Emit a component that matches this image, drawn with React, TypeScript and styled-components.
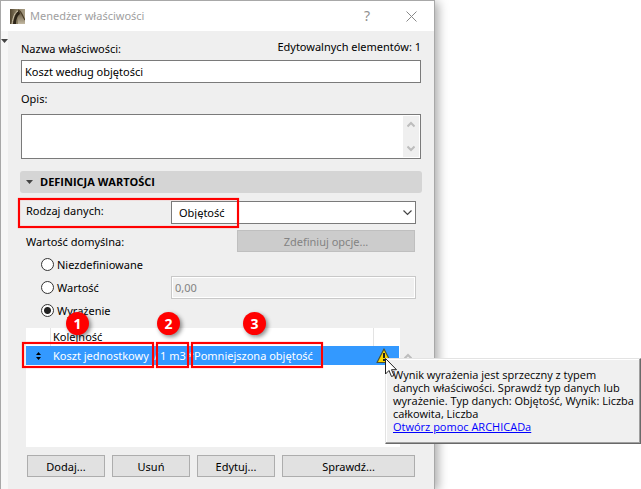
import React from "react";
import styled, { createGlobalStyle, css } from "styled-components";

const GlobalStyle = createGlobalStyle`
  *, *::before, *::after { box-sizing: border-box; }
  body {
    margin: 0;
    background: #fff;
    color: #000;
    font: 11px/13px "Noto Sans", "Open Sans", sans-serif;
  }
  button, input, select, textarea { font: inherit; color: inherit; margin: 0; }
`;

const Page = styled.div`
  min-height: 100vh;
  padding-right: 206px;
  display: flex;
  overflow: hidden;
`;

const Dialog = styled.main`
  flex: 1;
  min-width: 0;
  border: 1px solid #a8a8a8;
  border-bottom: 0;
  background: #efefef;
  box-shadow: 3px 2px 10px rgba(0, 0, 0, 0.35);
  display: flex;
  flex-direction: column;
`;

const TitleBar = styled.header`
  height: 30px;
  padding: 0 17px 0 9px;
  background: #fff;
  display: flex;
  align-items: center;
`;

const Title = styled.h1`
  margin: 0 auto 0 5px;
  font-size: 11px;
  font-weight: 400;
  line-height: 16px;
  color: #a0a0a0;
`;

const TitleButton = styled.button`
  width: 12px;
  height: 16px;
  margin-left: 32px;
  padding: 0;
  border: 0;
  background: none;
  color: #909090;
  font-size: 14px;
  line-height: 16px;
  display: grid;
  place-items: center;
`;

const Body = styled.div`
  flex: 1;
  display: flex;
`;

const Gutter = styled.div`
  width: 7px;
  background: #f7f7f7;
  padding-top: 8px;
`;

const Content = styled.div`
  flex: 1;
  min-width: 0;
  padding: 9px 12px 11px;
`;

const Field = styled.div`
  padding: 0 1px;
`;

const NameHeader = styled.div`
  display: flex;
  justify-content: space-between;
  height: 20px;
`;

const NameLabel = styled.label`
  padding-top: 2px;
`;

const TextInput = styled.input`
  display: block;
  width: 100%;
  height: 23px;
  padding: 0 3px;
  border: 1px solid #7a7a7a;
  background: #fff;

  &:disabled {
    border-color: #c8c8c8;
    background: #efefef;
    color: #828282;
    box-shadow: inset 0 0 0 1px #fff;
  }
`;

const DescriptionLabel = styled.label`
  display: block;
  padding: 9px 0;
`;

const TextFrame = styled.div`
  display: flex;
  height: 45px;
  padding: 1px;
  border: 1px solid #7a7a7a;
  background: #fff;
`;

const TextArea = styled.textarea`
  flex: 1;
  min-width: 0;
  padding: 3px;
  border: 0;
  resize: none;
  overflow: hidden;
  background: #fff;
`;

const ScrollTrack = styled.div`
  width: 16px;
  padding: 5px 4px;
  background: #efefef;
  display: flex;
  flex-direction: column;
  justify-content: space-between;
`;

const SectionHeader = styled.h2`
  height: 22px;
  margin: 12px 0 5px;
  padding: 0 6px;
  border-radius: 3px;
  background: #d5d5d5;
  font-family: "Open Sans", "Noto Sans", sans-serif;
  font-size: 11px;
  line-height: 16px;
  display: flex;
  align-items: center;
  gap: 7px;
`;

const Section = styled.section`
  padding: 0 6px;
`;

const frame = css`
  border: 2px solid #f00;
  box-shadow: inset 0 0 1px #f44, 0 0 1px #f66;
  pointer-events: none;
`;

const TypeRow = styled.div`
  position: relative;
  display: grid;
  grid-template-columns: 145px 1fr;
  padding: 3px 0;
`;

const TypeFrame = styled.div`
  ${frame}
  position: absolute;
  left: -8px;
  top: 0;
  width: 221px;
  height: 30px;
`;

const RowLabel = styled.label`
  padding-top: 3px;
`;

const SelectBox = styled.div`
  position: relative;
  svg { position: absolute; right: 4px; top: 8px; pointer-events: none; }
`;

const Select = styled.select`
  appearance: none;
  display: block;
  width: 100%;
  height: 23px;
  padding: 0 20px 0 7px;
  border: 1px solid #7a7a7a;
  border-radius: 0;
  background: #fff;
`;

const DefaultRow = styled.div`
  display: flex;
  justify-content: space-between;
  align-items: center;
  padding: 3px 1px 0 0;
`;

const Button = styled.button`
  min-width: 0;
  height: 22px;
  padding: 0;
  border: 1px solid #adadad;
  background: #e1e1e1;

  &:disabled {
    width: 178px;
    border-color: #bfbfbf;
    background: #ccc;
    color: #838383;
  }
`;

const Options = styled.fieldset`
  margin: 0 0 6px;
  padding: 1px 0 0 15px;
  border: 0;
  min-width: 0;
  display: grid;
  grid-template-columns: 130px 1fr;
  grid-auto-rows: 23px;
`;

const RadioLabel = styled.label`
  grid-column: 1;
  display: flex;
  align-items: center;
  gap: 3px;
`;

const Radio = styled.input`
  appearance: none;
  width: 13px;
  height: 13px;
  border: 1px solid #333;
  border-radius: 50%;
  background: #fff;
  &:checked { background: radial-gradient(circle, #222 3px, #fff 4px); }
`;

const ListArea = styled.div`
  position: relative;
  display: grid;
  grid-template-columns: 1fr 16px;
  height: 119px;
`;

const ListPane = styled.div`
  background: #fff;
`;

const ListScroll = styled.div`
  padding: 21px 0 0 4px;
`;

const Table = styled.table`
  width: 100%;
  padding-right: 1px;
  border-spacing: 0;
  table-layout: fixed;
`;

const HeadCell = styled.th<{ $width?: number }>`
  width: ${(p) => (p.$width ? `${p.$width}px` : "auto")};
  height: 18px;
  padding: 0 0 2px 2px;
  border-right: 1px solid #e3e3e3;
  font-weight: 400;
  text-align: left;
  &:last-child { border-right: 0; }
`;

const Cell = styled.td`
  height: 19px;
  padding: 0 0 0 2px;
  background: #3399ff;
  color: #fff;
  white-space: pre;
  &:first-child { padding-left: 10px; }
  svg { display: block; }
`;

const Formula = styled.span`
  display: flex;
`;

const Term = styled.span<{ $width: number }>`
  width: ${(p) => p.$width}px;
`;

const WarningAnchor = styled.div`
  position: relative;
`;

const Tooltip = styled.div`
  position: absolute;
  left: 9px;
  top: 10px;
  z-index: 3;
  width: 256px;
  padding: 9px 2px 10px 7px;
  border: 1px solid;
  border-color: #e3e3e3 #696969 #696969 #e3e3e3;
  box-shadow: inset -1px -1px #a0a0a0, inset 1px 1px #fff;
  background: #f0f0f0;
  color: #000;
  font-family: "Open Sans", "Noto Sans", sans-serif;
  white-space: normal;
  p { margin: 0; }
  a { color: #00f; }
`;

const Cursor = styled.svg`
  position: absolute;
  left: 9px;
  top: 10px;
  z-index: 4;
`;

const Mark = styled.div<{ $left: number; $width: number }>`
  ${frame}
  position: absolute;
  z-index: 1;
  left: ${(p) => p.$left}px;
  top: 14px;
  width: ${(p) => p.$width}px;
  height: 26px;
`;

const Badge = styled.span<{ $left: number }>`
  position: absolute;
  z-index: 2;
  left: ${(p) => p.$left}px;
  top: -16px;
  width: 23px;
  height: 23px;
  border-radius: 50%;
  background: #f00;
  color: #fff;
  box-shadow: 2px 2px 4px rgba(0, 0, 0, 0.45);
  font-size: 14px;
  font-weight: 700;
  line-height: 23px;
  text-align: center;
`;

const ButtonRow = styled.div`
  display: grid;
  grid-template-columns: 78fr 78fr 78fr 133fr;
  gap: 7px;
  padding: 8px 1px 0;
`;

const ScrollArrow = ({ down = false }: { down?: boolean }) => (
  <svg width="8" height="7" viewBox="0 0 8 7" aria-hidden="true">
    <path d={down ? "M0.5 1.5 4 5 7.500 1.5" : "M0.5 5.5 4 2 7.500 5.5"} fill="none" stroke="#bdbdbd" strokeWidth="2" />
  </svg>
);

const Logo = () => (
  <svg width="15" height="15" viewBox="0 0 15 15" aria-hidden="true">
    <defs>
      <linearGradient id="logoBack" x1="0" x2="1" y1="0" y2="0">
        <stop offset="0" stopColor="#51452f" />
        <stop offset="0.4" stopColor="#85795e" />
        <stop offset="1" stopColor="#a99e86" />
      </linearGradient>
      <linearGradient id="logoArch" x1="0" x2="0" y1="0" y2="1">
        <stop offset="0" stopColor="#5a4c35" />
        <stop offset="1" stopColor="#c3b9a2" />
      </linearGradient>
    </defs>
    <rect width="15" height="15" fill="url(#logoBack)" />
    <path d="M8 2C12 2 12 8 15 12V15H8Z" fill="url(#logoArch)" />
    <path d="M3 15C4 8 6 3 9 2L10 5C8 6 6 10 6 15Z" fill="#2c2417" />
    <path d="M2 15C3 8 5 3 8 2" fill="none" stroke="#cfc5ad" />
    <path d="M8 1C12 2 12 7 15 11" fill="none" stroke="#473a25" strokeWidth="1.200" />
  </svg>
);

export default function App() {
  return (
    <>
      <GlobalStyle />
      <Page>
        <Dialog>
          <TitleBar>
            <Logo />
            <Title>Menedżer właściwości</Title>
            <TitleButton aria-label="Pomoc">?</TitleButton>
            <TitleButton aria-label="Zamknij">
              <svg width="11" height="11" viewBox="0 0 11 11">
                <path d="M0.500 0.500 10.500 10.500M10.500 0.500 0.500 10.500" stroke="#888" fill="none" />
              </svg>
            </TitleButton>
          </TitleBar>
          <Body>
            <Gutter>
              <svg width="7" height="4" viewBox="0 0 7 4" aria-hidden="true" display="block">
                <path d="M0 0H7L3.500 4Z" fill="#444" />
              </svg>
            </Gutter>
            <Content>
              <Field>
                <NameHeader>
                  <NameLabel htmlFor="name">Nazwa właściwości:</NameLabel>
                  <span>Edytowalnych elementów: 1</span>
                </NameHeader>
                <TextInput id="name" defaultValue="Koszt według objętości" />
                <DescriptionLabel htmlFor="description">Opis:</DescriptionLabel>
                <TextFrame>
                  <TextArea id="description" />
                  <ScrollTrack>
                    <ScrollArrow />
                    <ScrollArrow down />
                  </ScrollTrack>
                </TextFrame>
              </Field>
              <SectionHeader>
                <svg width="7" height="4" viewBox="0 0 7 4" aria-hidden="true">
                  <path d="M0 0H7L3.500 4Z" fill="#444" />
                </svg>
                DEFINICJA WARTOŚCI
              </SectionHeader>
              <Section>
                <TypeRow>
                  <RowLabel htmlFor="type">Rodzaj danych:</RowLabel>
                  <SelectBox>
                    <Select id="type" defaultValue="volume">
                      <option value="volume">Objętość</option>
                    </Select>
                    <svg width="9" height="7" viewBox="0 0 9 7" aria-hidden="true">
                      <path d="M0.500 1.500 4.500 5.500 8.500 1.500" fill="none" stroke="#444" strokeWidth="1.200" />
                    </svg>
                  </SelectBox>
                  <TypeFrame />
                </TypeRow>
                <DefaultRow>
                  <span>Wartość domyślna:</span>
                  <Button disabled>Zdefiniuj opcje...</Button>
                </DefaultRow>
                <Options aria-label="Wartość domyślna">
                  <RadioLabel>
                    <Radio type="radio" name="default" />
                    Niezdefiniowane
                  </RadioLabel>
                  <RadioLabel>
                    <Radio type="radio" name="default" />
                    Wartość
                  </RadioLabel>
                  <TextInput disabled aria-label="Wartość" defaultValue="0,00" />
                  <RadioLabel>
                    <Radio type="radio" name="default" defaultChecked />
                    Wyrażenie
                  </RadioLabel>
                </Options>
                <ListArea>
                  <ListPane>
                    <Table>
                      <thead>
                        <tr>
                          <HeadCell $width={25} />
                          <HeadCell>Kolejność</HeadCell>
                          <HeadCell $width={25} />
                        </tr>
                      </thead>
                      <tbody>
                        <tr>
                          <Cell>
                            <svg width="5" height="8" viewBox="0 0 5 8" aria-hidden="true">
                              <path d="M2.500 0 5 3H0ZM2.500 8 0 5H5Z" fill="#000" />
                            </svg>
                          </Cell>
                          <Cell>
                            <Formula>
                              <Term $width={101}>Koszt jednostkowy</Term>
                              <Term $width={6}>/</Term>
                              <Term $width={28}>1 m3</Term>
                              <Term $width={6}>*</Term>
                              <Term $width={130}>Pomniejszona objętość</Term>
                            </Formula>
                          </Cell>
                          <Cell>
                            <WarningAnchor>
                              <svg width="16" height="16" viewBox="0 0 16 16" role="img" aria-label="Ostrzeżenie">
                                <path d="M8 1 15 14.500H1Z" fill="#fbd900" stroke="#4b5035" strokeWidth="1.200" strokeLinejoin="round" />
                                <path d="M7 5H9V10H7ZM7 11H9V13H7Z" fill="#222" />
                              </svg>
                              <Tooltip role="tooltip">
                                <p>
                                  Wynik wyrażenia jest sprzeczny z typem
                                  <br />
                                  danych właściwości. Sprawdź typ danych lub
                                  <br />
                                  wyrażenie. Typ danych: Objętość, Wynik: Liczba
                                  <br />
                                  całkowita, Liczba
                                </p>
                                <a href="#pomoc">Otwórz pomoc ARCHICADa</a>
                              </Tooltip>
                              <Cursor width="12" height="19" viewBox="0 0 12 19" aria-hidden="true">
                                <path d="M0.500 0.500V16L4 12.500 6.500 18.500 9 17.500 6.500 11.700H11.500Z" fill="#fff" stroke="#222" />
                              </Cursor>
                            </WarningAnchor>
                          </Cell>
                        </tr>
                      </tbody>
                    </Table>
                  </ListPane>
                  <ListScroll>
                    <ScrollArrow />
                  </ListScroll>
                  <Mark $left={-4} $width={132} />
                  <Mark $left={130} $width={33} />
                  <Mark $left={165} $width={132} />
                  <Badge $left={40}>1</Badge>
                  <Badge $left={131}>2</Badge>
                  <Badge $left={217}>3</Badge>
                </ListArea>
                <ButtonRow>
                  <Button>Dodaj...</Button>
                  <Button>Usuń</Button>
                  <Button>Edytuj...</Button>
                  <Button>Sprawdź...</Button>
                </ButtonRow>
              </Section>
            </Content>
          </Body>
        </Dialog>
      </Page>
    </>
  );
}
